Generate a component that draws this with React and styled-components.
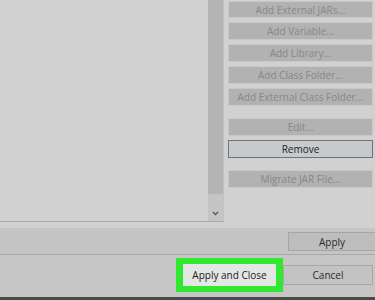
import React from "react";
import styled, { createGlobalStyle } from "styled-components";

const Global = createGlobalStyle`
  html, body { margin: 0; padding: 0; }
  body { width: 375px; height: 300px; overflow: hidden; background: #cdcdcd; }
  * { box-sizing: border-box; }
`;

const Frame = styled.div`
  width: 375px;
  height: 300px;
  display: flex;
  flex-direction: column;
  background: #c9c9c9;
  font-family: "Open Sans", "Noto Sans", sans-serif;
  font-size: 10px;
  overflow: hidden;
`;

const Top = styled.div`
  height: 228px;
  display: flex;
  background: #d1d1d1;
`;

const ListPanel = styled.div`
  width: 224px;
  height: 222px;
  display: flex;
  border-bottom: 1px solid #a9a9a9;
  border-right: 1px solid #c2c2c2;
  background: #d2d2d2;
`;

const ListArea = styled.div`
  flex: 1;
`;

const Scrollbar = styled.div`
  width: 15px;
  display: flex;
  flex-direction: column;
  background: #c4c4c4;
`;

const Thumb = styled.div`
  height: 194px;
  background: #b4b4b4;
`;

const Track = styled.div`
  flex: 1;
  display: flex;
  align-items: flex-end;
  justify-content: center;
  padding-bottom: 5px;
`;

const ButtonColumn = styled.div`
  margin-left: 4px;
  width: 145px;
  padding-top: 1px;
  display: flex;
  flex-direction: column;
  gap: 4px;
`;

const SideButton = styled.div`
  height: ${(p) => p.$h || 18}px;
  margin-top: ${(p) => p.$mt || 0}px;
  display: flex;
  align-items: center;
  justify-content: center;
  background: ${(p) => (p.$active ? "#c6cacd" : "#b2b2b2")};
  border: 1px solid ${(p) => (p.$active ? "#6f7377" : "#c8c8c8")};
  color: ${(p) => (p.$active ? "#1c1c1c" : "#878787")};
  white-space: nowrap;
`;

const ApplyRow = styled.div`
  height: 27px;
  display: flex;
  justify-content: flex-end;
  align-items: center;
  background: #c5c5c5;
  border-bottom: 1px solid #a8a8a8;
  padding-top: 1px;
`;

const ApplyBtn = styled.div`
  width: 87px;
  height: 19px;
  display: flex;
  align-items: center;
  justify-content: center;
  background: #bdbdbd;
  border: 1px solid #a5a5a5;
  border-right: none;
  color: #2a2a2a;
`;

const BottomRow = styled.div`
  flex: 1;
  display: flex;
  align-items: center;
  justify-content: flex-end;
  background: #c6c6c6;
  padding-bottom: 2px;
  padding-right: 2px;
`;

const Highlight = styled.div`
  padding: 6px 7px;
  background: #2fe82f;
  display: flex;
`;

const PrimaryBtn = styled.div`
  width: 93px;
  height: 22px;
  display: flex;
  align-items: center;
  justify-content: center;
  background: #e4e6e4;
  color: #202020;
  font-size: 10px;
`;

const CancelBtn = styled.div`
  width: 90px;
  height: 20px;
  display: flex;
  align-items: center;
  justify-content: center;
  background: #c3c3c3;
  border: 1px solid #a8a8a8;
  color: #2a2a2a;
  font-size: 10px;
`;

const BottomEdge = styled.div`
  height: 3px;
  background: #4a4a4a;
`;

const Chevron = () => (
  <svg width="7" height="5" viewBox="0 0 7 5">
    <path d="M1 1 L3.5 3.5 L6 1" stroke="#555" strokeWidth="1.3" fill="none" />
  </svg>
);

export default function App() {
  return (
    <>
      <Global />
      <Frame>
        <Top>
          <ListPanel>
            <ListArea />
            <Scrollbar>
              <Thumb />
              <Track>
                <Chevron />
              </Track>
            </Scrollbar>
          </ListPanel>
          <ButtonColumn>
            <SideButton $h={17}>Add External JARs...</SideButton>
            <SideButton>Add Variable...</SideButton>
            <SideButton>Add Library...</SideButton>
            <SideButton>Add Class Folder...</SideButton>
            <SideButton>Add External Class Folder...</SideButton>
            <SideButton $mt={8}>Edit...</SideButton>
            <SideButton $active>Remove</SideButton>
            <SideButton $mt={8}>Migrate JAR File...</SideButton>
          </ButtonColumn>
        </Top>
        <ApplyRow>
          <ApplyBtn>Apply</ApplyBtn>
        </ApplyRow>
        <BottomRow>
          <Highlight>
            <PrimaryBtn>Apply and Close</PrimaryBtn>
          </Highlight>
          <CancelBtn>Cancel</CancelBtn>
        </BottomRow>
        <BottomEdge />
      </Frame>
    </>
  );
}
